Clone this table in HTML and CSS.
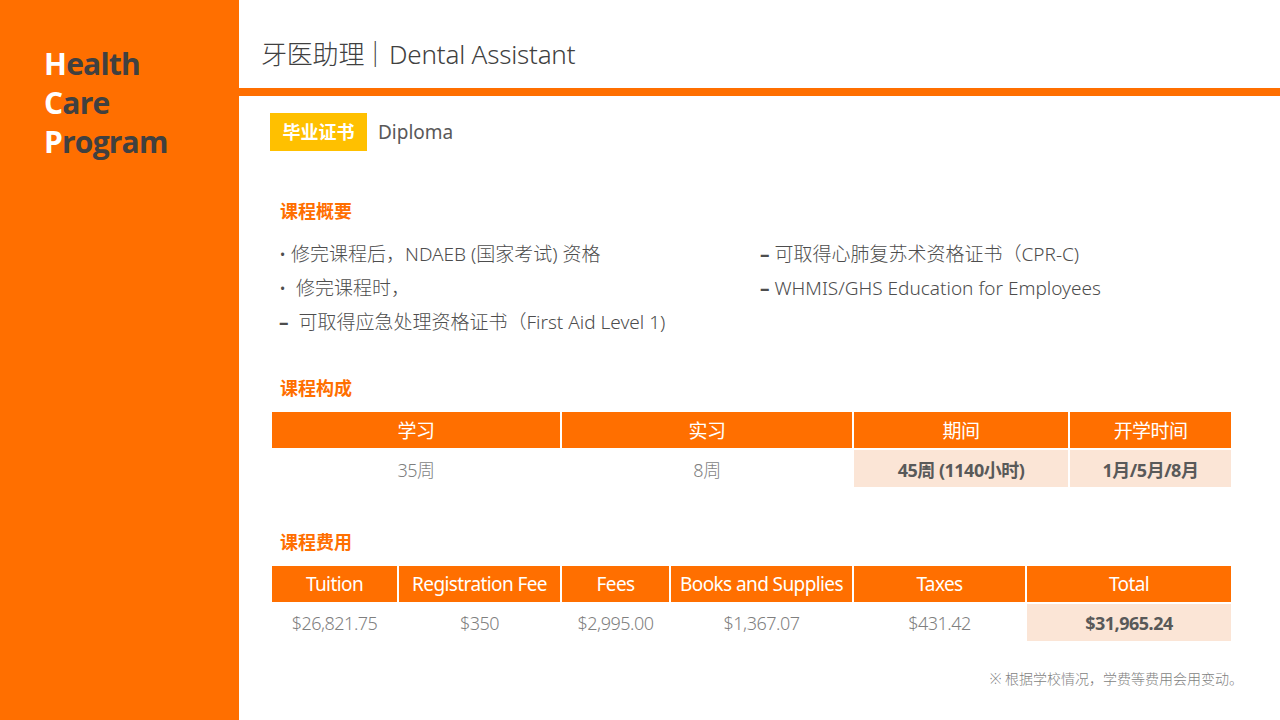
FILE: index.html
```html
<!DOCTYPE html>
<html lang="zh">
<head>
<meta charset="UTF-8">
<title>Dental Assistant</title>
<link rel="stylesheet" href="styles.css">
</head>
<body>
<div class="page">
  <div class="side">
    <div class="brand">
      <div><span class="cap">H</span>ealth</div>
      <div><span class="cap">C</span>are</div>
      <div><span class="cap">P</span>rogram</div>
    </div>
  </div>
  <div class="main">
    <div class="head">
      <h1>牙医助理<span class="sep">│</span>Dental Assistant</h1>
    </div>
    <div class="bar"></div>
    <div class="content">
      <div class="cert">
        <span class="badge">毕业证书</span>
        <span class="cert-name">Diploma</span>
      </div>

      <h2 class="sec sec-first">课程概要</h2>
      <div class="summary">
        <ul class="col">
          <li>• 修完课程后，NDAEB (国家考试) 资格</li>
          <li>•&nbsp; 修完课程时，</li>
          <li><span class="dash">–</span>&nbsp; 可取得应急处理资格证书（First Aid Level 1)</li>
        </ul>
        <ul class="col col-right">
          <li><span class="dash">–</span> 可取得心肺复苏术资格证书（CPR-C)</li>
          <li><span class="dash">–</span> WHMIS/GHS Education for Employees</li>
        </ul>
      </div>

      <h2 class="sec">课程构成</h2>
      <table class="grid">
        <tr>
          <th class="w1">学习</th>
          <th class="w2">实习</th>
          <th class="w3">期间</th>
          <th>开学时间</th>
        </tr>
        <tr>
          <td>35周</td>
          <td>8周</td>
          <td class="hl">45周 (1140小时)</td>
          <td class="hl">1月/5月/8月</td>
        </tr>
      </table>

      <h2 class="sec sec-fees">课程费用</h2>
      <table class="grid fees">
        <tr>
          <th class="f1">Tuition</th>
          <th class="f2">Registration Fee</th>
          <th class="f3">Fees</th>
          <th class="f4">Books and Supplies</th>
          <th class="f5">Taxes</th>
          <th>Total</th>
        </tr>
        <tr>
          <td>$26,821.75</td>
          <td>$350</td>
          <td>$2,995.00</td>
          <td>$1,367.07</td>
          <td>$431.42</td>
          <td class="hl">$31,965.24</td>
        </tr>
      </table>

      <p class="note">※ 根据学校情况，学费等费用会用变动。</p>
    </div>
  </div>
</div>
</body>
</html>
```

FILE: styles.css
```css
body {
  margin: 0;
  font-family: "Noto Sans", "Noto Sans CJK SC", sans-serif;
  background: #fff;
}
.page {
  display: flex;
  width: 1280px;
  height: 720px;
  overflow: hidden;
}
.side {
  width: 239px;
  background: #ff6f00;
  flex-shrink: 0;
}
.brand {
  padding: 44px 0 0 44px;
  font-family: "Open Sans", sans-serif;
  font-weight: 700;
  font-size: 30px;
  line-height: 39px;
  letter-spacing: -0.8px;
  color: #404040;
}
.cap {
  color: #fff;
}
.main {
  flex: 1;
  display: flex;
  flex-direction: column;
}
.head {
  height: 88px;
}
h1 {
  margin: 0;
  padding: 36px 0 0 22px;
  font-family: "Noto Sans", "Noto Sans CJK SC", sans-serif;
  font-weight: 300;
  font-size: 26px;
  line-height: 36px;
  color: #404040;
  letter-spacing: -0.2px;
}
.sep {
  margin: 0 1px 0 -2px;
}
.bar {
  height: 8px;
  background: #ff6f00;
}
.content {
  padding: 17px 0 0 31px;
}
.cert {
  display: flex;
  align-items: center;
}
.badge {
  background: #ffc000;
  color: #fff;
  font-weight: 700;
  font-size: 18px;
  width: 97px;
  height: 38px;
  line-height: 38px;
  text-align: center;
}
.cert-name {
  margin-left: 11px;
  color: #595959;
  font-size: 19px;
  font-family: "Noto Sans", sans-serif;
}
.sec {
  margin: 37px 0 0 10px;
  font-size: 18px;
  font-weight: 700;
  line-height: 24px;
  color: #ff6f00;
}
.sec-first {
  margin-top: 48px;
}
.sec-fees {
  margin-top: 41px;
}
.summary {
  display: flex;
  margin: 14px 0 0 9px;
}
.col {
  list-style: none;
  margin: 0;
  padding: 0;
  width: 481px;
  font-size: 19px;
  font-weight: 300;
  line-height: 34px;
  color: #4d4d4d;
}
.dash {
  font-weight: 700;
}
table.grid {
  border-collapse: separate;
  border-spacing: 2px;
  margin: 10px 0 0 0;
  width: 963px;
}
.grid th {
  background: #ff6f00;
  color: #fff;
  font-weight: 400;
  font-size: 19px;
  height: 36px;
  padding: 0;
  letter-spacing: -0.6px;
  white-space: nowrap;
}
.grid td {
  height: 37px;
  padding: 0;
  text-align: center;
  font-size: 18px;
  font-weight: 300;
  color: #7f7f7f;
  letter-spacing: -0.5px;
}
.grid td.hl {
  background: #fbe5d6;
  color: #595959;
  font-weight: 700;
}
.w1 { width: 288px; }
.w2 { width: 290px; }
.w3 { width: 214px; }
.fees {
  margin-top: 8px;
}
.f1 { width: 125px; }
.f2 { width: 161px; }
.f3 { width: 107px; }
.f4 { width: 181px; }
.f5 { width: 171px; }
.note {
  margin: 25px 37px 0 0;
  text-align: right;
  font-size: 14px;
  font-weight: 300;
  color: #7f7f7f;
}
```
